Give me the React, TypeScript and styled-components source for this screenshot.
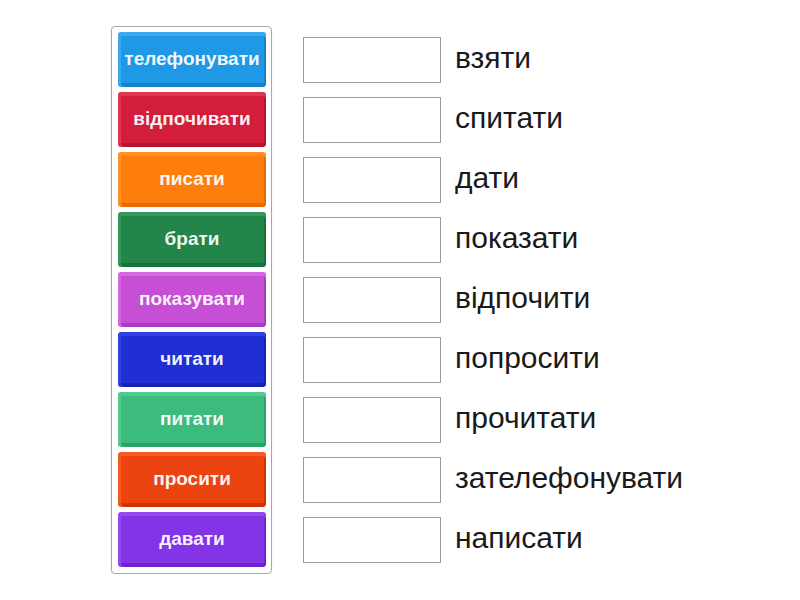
import React from 'react';
import styled, { createGlobalStyle } from 'styled-components';

const GlobalStyle = createGlobalStyle`
  html, body {
    margin: 0;
    padding: 0;
    background: #ffffff;
  }
  body {
    font-family: 'Liberation Sans', Arial, sans-serif;
  }
`;

interface TileColor {
  base: string;
  light: string;
  dark: string;
}

const tiles: { label: string; color: TileColor }[] = [
  { label: 'телефонувати', color: { base: '#1f98e6', light: '#3aa9ef', dark: '#1681cc' } },
  { label: 'відпочивати', color: { base: '#d31e3b', light: '#e03650', dark: '#b8122d' } },
  { label: 'писати', color: { base: '#fe7e0d', light: '#ff9127', dark: '#e86a00' } },
  { label: 'брати', color: { base: '#22854a', light: '#33985a', dark: '#17703b' } },
  { label: 'показувати', color: { base: '#c64fd6', light: '#d467e2', dark: '#ab3bbc' } },
  { label: 'читати', color: { base: '#1f2fd4', light: '#3242e2', dark: '#1722b2' } },
  { label: 'питати', color: { base: '#3bbb7c', light: '#52c98d', dark: '#2ca26a' } },
  { label: 'просити', color: { base: '#ec4410', light: '#f65a25', dark: '#cf3405' } },
  { label: 'давати', color: { base: '#8334e6', light: '#954af0', dark: '#6d22cc' } },
];

const targets = [
  'взяти',
  'спитати',
  'дати',
  'показати',
  'відпочити',
  'попросити',
  'прочитати',
  'зателефонувати',
  'написати',
];

const Page = styled.div`
  display: flex;
  align-items: flex-start;
  padding: 26px 0 0 111px;
  gap: 31px;
`;

const Panel = styled.div`
  display: flex;
  flex-direction: column;
  gap: 5px;
  padding: 5px 5px 6px 6px;
  border: 1px solid #a8a8a8;
  border-radius: 4px;
  box-shadow: 0 1px 2px rgba(0, 0, 0, 0.08);
`;

const Tile = styled.div<{ $c: TileColor }>`
  width: 148px;
  height: 55px;
  box-sizing: border-box;
  display: flex;
  align-items: center;
  justify-content: center;
  border-radius: 4px;
  background: ${(p) => p.$c.base};
  box-shadow:
    inset 0 4px 0 ${(p) => p.$c.light},
    inset 3px 0 0 ${(p) => p.$c.light},
    inset 0 -4px 0 ${(p) => p.$c.dark},
    inset -2px 0 0 ${(p) => p.$c.dark};
  color: rgba(255, 255, 255, 0.94);
  font-family: 'Liberation Sans', Arial, sans-serif;
  font-size: 19px;
  font-weight: 700;
  padding-bottom: 2px;
  white-space: nowrap;
`;

const Targets = styled.div`
  display: flex;
  flex-direction: column;
  gap: 5px;
  padding-top: 6px;
`;

const Row = styled.div`
  height: 55px;
  display: flex;
  align-items: center;
  gap: 14px;
`;

const Slot = styled.div`
  width: 138px;
  height: 46px;
  box-sizing: border-box;
  border: 1px solid #9a9a9a;
  background: #ffffff;
`;

const Word = styled.span`
  font-family: 'Liberation Sans', Arial, sans-serif;
  font-size: 30px;
  color: #1a1a1a;
  padding-bottom: 4px;
`;

export default function App() {
  return (
    <>
      <GlobalStyle />
      <Page>
        <Panel>
          {tiles.map((t) => (
            <Tile key={t.label} $c={t.color}>
              {t.label}
            </Tile>
          ))}
        </Panel>
        <Targets>
          {targets.map((w) => (
            <Row key={w}>
              <Slot />
              <Word>{w}</Word>
            </Row>
          ))}
        </Targets>
      </Page>
    </>
  );
}
